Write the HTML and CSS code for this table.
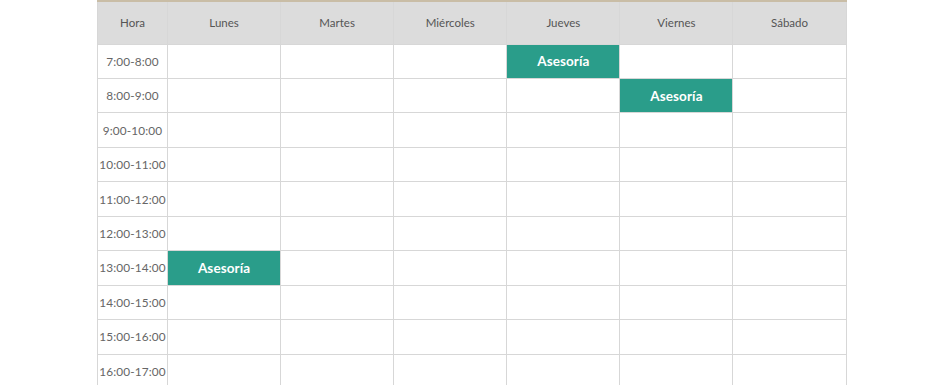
FILE: index.html
```html
<!DOCTYPE html>
<html lang="es">
<head>
<meta charset="utf-8">
<title>Horario</title>
<link rel="stylesheet" href="styles.css">
</head>
<body>
<table class="schedule">
  <colgroup>
    <col class="col-hora">
    <col class="col-day"><col class="col-day"><col class="col-day">
    <col class="col-day"><col class="col-day"><col class="col-day">
  </colgroup>
  <thead>
    <tr>
      <th>Hora</th><th>Lunes</th><th>Martes</th><th>Miércoles</th><th>Jueves</th><th>Viernes</th><th>Sábado</th>
    </tr>
  </thead>
  <tbody>
    <tr><td class="time">7:00-8:00</td><td></td><td></td><td></td><td class="event">Asesoría</td><td></td><td></td></tr>
    <tr><td class="time">8:00-9:00</td><td></td><td></td><td></td><td></td><td class="event">Asesoría</td><td></td></tr>
    <tr><td class="time">9:00-10:00</td><td></td><td></td><td></td><td></td><td></td><td></td></tr>
    <tr><td class="time">10:00-11:00</td><td></td><td></td><td></td><td></td><td></td><td></td></tr>
    <tr><td class="time">11:00-12:00</td><td></td><td></td><td></td><td></td><td></td><td></td></tr>
    <tr><td class="time">12:00-13:00</td><td></td><td></td><td></td><td></td><td></td><td></td></tr>
    <tr><td class="time">13:00-14:00</td><td class="event">Asesoría</td><td></td><td></td><td></td><td></td><td></td></tr>
    <tr><td class="time">14:00-15:00</td><td></td><td></td><td></td><td></td><td></td><td></td></tr>
    <tr><td class="time">15:00-16:00</td><td></td><td></td><td></td><td></td><td></td><td></td></tr>
    <tr><td class="time">16:00-17:00</td><td></td><td></td><td></td><td></td><td></td><td></td></tr>
  </tbody>
</table>
</body>
</html>
```
FILE: styles.css
```css
html, body {
  margin: 0;
  padding: 0;
  background: #ffffff;
  overflow: hidden;
}

body {
  font-family: Lato, "Noto Sans", sans-serif;
  color: #555555;
}

.schedule {
  width: 749px;
  margin: 0 0 0 97px;
  border-collapse: collapse;
  table-layout: fixed;
  border-top: 2px solid #c9bda6;
}

.col-hora { width: 70px; }
.col-day { width: 113.1px; }

.schedule th,
.schedule td {
  border: 1px solid #d7d7d7;
  padding: 0;
  text-align: center;
  vertical-align: middle;
}

.schedule th {
  height: 41.6px;
  background: #dcdcdc;
  font-weight: 400;
  font-size: 11.5px;
  color: #555555;
}

.schedule td {
  height: 33.44px;
  font-size: 11.8px;
}

.schedule .time {
  color: #666666;
  letter-spacing: 0.15px;
}

.schedule .event {
  background: #2a9d8a;
  color: #ffffff;
  font-size: 13.5px;
  font-weight: 700;
  letter-spacing: 0.1px;
}
```
